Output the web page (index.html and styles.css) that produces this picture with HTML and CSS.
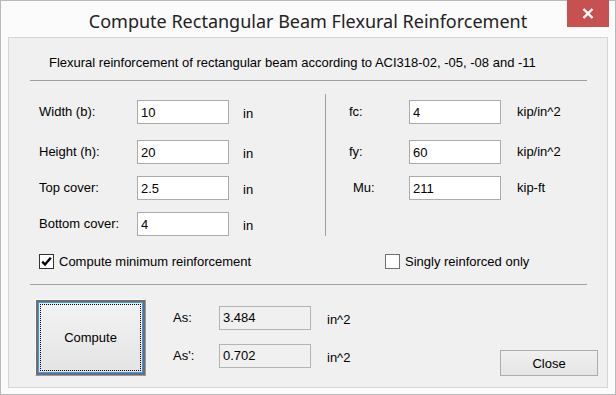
FILE: index.html
```html
<!DOCTYPE html>
<html>
<head>
    <meta charset="UTF-8">
    <title>Compute Rectangular Beam Flexural Reinforcement</title>
    <link rel="stylesheet" href="styles.css">
</head>
<body>
<div class="window">
    <div class="titlebar">
        <span class="title">Compute Rectangular Beam Flexural Reinforcement</span>
        <div class="win-close">
            <svg width="12" height="11" viewBox="0 0 12 11">
                <path d="M1.5 1 L10.5 10 M10.5 1 L1.5 10" stroke="#fff" stroke-width="2.4" fill="none"/>
            </svg>
        </div>
    </div>
    <div class="client">
        <p class="intro">Flexural reinforcement of rectangular beam according to ACI318-02, -05, -08 and -11</p>
        <div class="sep"></div>

        <div class="fields">
            <div class="vsep"></div>

            <label class="label" for="width">Width (b):</label>
            <input class="field" id="width" type="text" value="10">
            <span class="unit unit-left">in</span>
            <label class="label label-right" for="fc">fc:</label>
            <input class="field" id="fc" type="text" value="4">
            <span class="unit unit-right">kip/in^2</span>

            <label class="label" for="height">Height (h):</label>
            <input class="field" id="height" type="text" value="20">
            <span class="unit unit-left">in</span>
            <label class="label label-right" for="fy">fy:</label>
            <input class="field" id="fy" type="text" value="60">
            <span class="unit unit-right">kip/in^2</span>

            <label class="label" for="top">Top cover:</label>
            <input class="field" id="top" type="text" value="2.5">
            <span class="unit unit-left">in</span>
            <label class="label label-right label-mu" for="mu">Mu:</label>
            <input class="field" id="mu" type="text" value="211">
            <span class="unit unit-right">kip-ft</span>

            <label class="label" for="bottom">Bottom cover:</label>
            <input class="field" id="bottom" type="text" value="4">
            <span class="unit unit-left">in</span>
        </div>

        <div class="options">
            <div class="option option-first">
                <span class="checkbox checkbox-on">
                    <svg width="13" height="13" viewBox="0 0 13 13">
                        <path d="M2.2 6.6 L5 9.6 L10.8 2.8" stroke="#000" stroke-width="2.3" fill="none"/>
                    </svg>
                </span>
                <span>Compute minimum reinforcement</span>
            </div>
            <div class="option">
                <span class="checkbox"></span>
                <span>Singly reinforced only</span>
            </div>
        </div>

        <div class="sep sep-bottom"></div>

        <div class="results">
            <button class="compute" type="button">Compute</button>
            <div class="outputs">
                <span class="label">As:</span>
                <div class="field field-out">3.484</div>
                <span class="unit unit-out">in^2</span>
                <span class="label">As':</span>
                <div class="field field-out">0.702</div>
                <span class="unit unit-out">in^2</span>
            </div>
            <button class="close-btn" type="button">Close</button>
        </div>
    </div>
</div>
</body>
</html>
```

FILE: styles.css
```css
body {
    margin: 0;
    font-family: "Liberation Sans", Arial, sans-serif;
    font-size: 13px;
    color: #000;
}
.window {
    position: relative;
    width: 616px;
    height: 395px;
    box-sizing: border-box;
    border: 1px solid #b9b9b9;
    background-color: #fbfbfb;
    padding: 0 7px 6px;
    display: flex;
    flex-direction: column;
}
.titlebar {
    height: 36px;
    display: flex;
    justify-content: center;
    align-items: center;
}
.title {
    font-family: "Noto Sans", "Open Sans", sans-serif;
    font-size: 18px;
    color: #222;
    padding-top: 3px;
}
.win-close {
    position: absolute;
    top: -1px;
    right: 6px;
    width: 42px;
    height: 27px;
    background-color: #c75050;
    display: flex;
    align-items: center;
    justify-content: center;
}
.client {
    flex: 1;
    border: 1px solid #d6d6d6;
    background-color: #f0f0f0;
}
.intro {
    margin: 17px 0 0 40px;
    line-height: 15px;
}
.sep {
    margin: 10px 0 0 21px;
    width: 557px;
    border-top: 1px solid #a0a0a0;
}
.fields {
    display: grid;
    margin: 19px 0 0 30px;
    grid-template-columns: 98px 92px 96px 1px 83px 92px auto;
    grid-template-rows: 40px 36px 36px 24px;
    align-items: start;
}
.vsep {
    grid-column: 4;
    grid-row: 1 / 5;
    margin-top: -6px;
    height: 142px;
    background-color: #a0a0a0;
}
.label,
.unit {
    height: 24px;
    line-height: 24px;
    white-space: nowrap;
}
.unit-left {
    padding-left: 14px;
    line-height: 27px;
}
.label-right {
    padding-left: 23px;
}
.label-mu {
    padding-left: 27px;
}
.unit-right {
    padding-left: 16px;
}
.field {
    box-sizing: border-box;
    width: 92px;
    height: 24px;
    margin: 0;
    padding: 0 3px;
    border: 1px solid #ababab;
    background-color: #fff;
    font-family: "Liberation Sans", Arial, sans-serif;
    font-size: 13px;
    line-height: 22px;
    color: #000;
}
.field-out {
    background-color: #f0f0f0;
    border-color: #b4b4b4;
}
.options {
    display: flex;
    margin: 17px 0 0 30px;
    height: 16px;
}
.option {
    display: flex;
    align-items: center;
    gap: 5px;
}
.option-first {
    width: 346px;
}
.checkbox {
    box-sizing: border-box;
    width: 15px;
    height: 15px;
    border: 1px solid #707070;
    background-color: #fff;
    display: flex;
}
.checkbox-on {
    border-color: #333;
}
.sep-bottom {
    margin-top: 15px;
}
.results {
    display: flex;
    margin: 14px 0 0 26px;
}
.compute {
    position: relative;
    box-sizing: border-box;
    width: 111px;
    height: 77px;
    padding: 0;
    border: 1px solid;
    border-color: #fdfdfd #9c9c9c #9c9c9c #fdfdfd;
    box-shadow: inset 0 0 0 2px #6e6e6e, inset 0 0 0 3px #3399ff;
    background: linear-gradient(#f3f3f3, #e3e3e3);
    font-family: "Liberation Sans", Arial, sans-serif;
    font-size: 13px;
    color: #000;
}
.compute::after {
    content: "";
    position: absolute;
    top: 4px;
    left: 4px;
    right: 4px;
    bottom: 4px;
    border: 1px dotted #000;
}
.outputs {
    display: grid;
    margin: 7px 0 0 27px;
    grid-template-columns: 46px 92px auto;
    grid-template-rows: 38px 24px;
    align-items: start;
}
.unit-out {
    padding-left: 16px;
    line-height: 28px;
}
.close-btn {
    align-self: flex-end;
    margin: 0 9px 0 auto;
    box-sizing: border-box;
    width: 98px;
    height: 26px;
    border: 1px solid #acacac;
    background: linear-gradient(#f0f0f0, #e5e5e5);
    font-family: "Liberation Sans", Arial, sans-serif;
    font-size: 13px;
    color: #000;
}
```
